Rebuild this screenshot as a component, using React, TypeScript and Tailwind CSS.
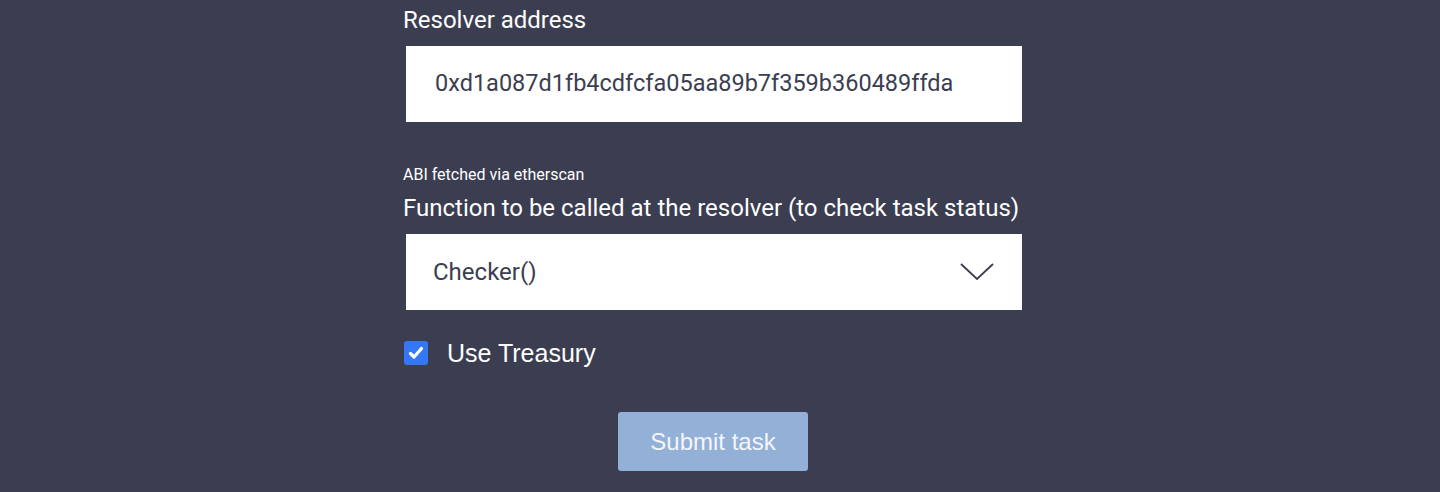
import { useState } from "react";

export default function App() {
  const [useTreasury, setUseTreasury] = useState(true);

  return (
    <div className="flex min-h-[492px] w-full justify-center bg-[#3b3d51] pr-[12px] font-['Roboto',sans-serif]">
      <div className="flex w-[622px] flex-col">
        <label className="mt-[5px] text-[24px] leading-[30px] text-white">Resolver address</label>
        <div className="ml-[3px] mt-[11px] flex h-[76px] w-[616px] items-center bg-white px-[29px]">
          <span className="text-[23.5px] text-[#3b3d51]">0xd1a087d1fb4cdfcfa05aa89b7f359b360489ffda</span>
        </div>

        <div className="mt-[43px] text-[16px] leading-[20px] text-white">ABI fetched via etherscan</div>
        <label className="mt-[8px] text-[24px] leading-[30px] text-white">
          Function to be called at the resolver (to check task status)
        </label>
        <div className="ml-[3px] mt-[11px] flex h-[76px] w-[616px] items-center justify-between bg-white pl-[27px] pr-[28px]">
          <span className="text-[24px] text-[#3b3d51]">Checker()</span>
          <svg width="34" height="18" viewBox="0 0 34 18" fill="none">
            <path d="M1 1L17 16L33 1" stroke="#3b3d51" strokeWidth="1.8" />
          </svg>
        </div>

        <label className="mt-[28px] flex cursor-pointer items-center gap-[19px] font-['Liberation_Sans',sans-serif]">
          <span
            onClick={() => setUseTreasury(!useTreasury)}
            className="ml-[1px] flex h-[24px] w-[24px] items-center justify-center rounded-[3px] bg-[#3478f6]"
          >
            {useTreasury && (
              <svg width="16" height="14" viewBox="0 0 16 14" fill="none">
                <path d="M2.5 7.5L6 11L13.5 2.5" stroke="white" strokeWidth="3.2" strokeLinecap="round" strokeLinejoin="round" />
              </svg>
            )}
          </span>
          <span className="text-[25px] leading-[30px] text-white">Use Treasury</span>
        </label>

        <div className="mt-[44px] flex justify-center pr-[2px]">
          <button
            type="button"
            className="h-[59px] w-[190px] rounded-[3px] bg-[#93b0d6] font-['Liberation_Sans',sans-serif] text-[24px] text-[#f3f5fa]"
          >
            Submit task
          </button>
        </div>
      </div>
    </div>
  );
}
